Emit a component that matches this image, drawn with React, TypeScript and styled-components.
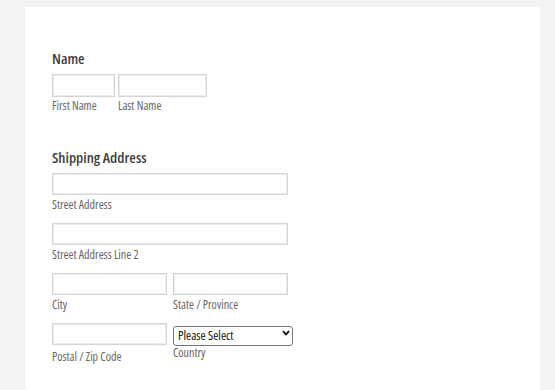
import React from "react";
import styled, { createGlobalStyle } from "styled-components";

const Global = createGlobalStyle`
  html, body { margin: 0; padding: 0; background: #f3f3f3; }
  body { font-family: "Open Sans", sans-serif; }
`;

const Card = styled.div`
  margin: 7px 0 0 25px;
  width: 515px;
  min-height: 383px;
  background: #ffffff;
  box-sizing: border-box;
  padding: 42px 27px 0;
  display: flex;
  flex-direction: column;
`;

const Section = styled.section<{ $gap?: number }>`
  display: flex;
  flex-direction: column;
  margin-bottom: ${(p) => p.$gap ?? 0}px;
`;

const Heading = styled.h2`
  margin: 0 0 7px;
  font-family: "Open Sans", sans-serif;
  font-stretch: 75%;
  font-weight: 600;
  font-size: 15px;
  line-height: 18px;
  color: #3f3f3f;
`;

const Rows = styled.div`
  display: flex;
  flex-direction: column;
  gap: 11px;
`;

const Row = styled.div<{ $gap: number }>`
  display: flex;
  gap: ${(p) => p.$gap}px;
  align-items: flex-start;
`;

const Field = styled.div`
  display: flex;
  flex-direction: column;
`;

const Input = styled.input<{ $w: number; $h?: number }>`
  width: ${(p) => p.$w}px;
  height: ${(p) => p.$h ?? 22}px;
  box-sizing: border-box;
  margin: 0;
  padding: 0 4px;
  border: 1px solid #d4d4d4;
  box-shadow: inset 0 0 0 1px #ececec;
  background: #fff;
  outline: none;
`;

const Label = styled.label<{ $top?: number }>`
  margin-top: ${(p) => p.$top ?? 3}px;
  font-family: "Open Sans", sans-serif;
  font-stretch: 75%;
  font-size: 12px;
  line-height: 14px;
  color: #666666;
`;

const SelectWrap = styled.div`
  position: relative;
  width: 120px;
  height: 20px;
`;

const Select = styled.select`
  appearance: none;
  -webkit-appearance: none;
  width: 120px;
  height: 20px;
  box-sizing: border-box;
  margin: 0;
  padding: 0 18px 0 4px;
  border: 1px solid #767676;
  border-radius: 3px;
  background: #fff;
  font-family: "Open Sans", sans-serif;
  font-stretch: 75%;
  font-weight: 500;
  font-size: 12.5px;
  color: #111;
  outline: none;
`;

const Chevron = styled.svg`
  position: absolute;
  right: 3px;
  top: 7px;
  width: 8px;
  height: 6px;
  pointer-events: none;
`;

export default function App() {
  return (
    <>
      <Global />
      <Card>
        <Section $gap={35}>
          <Heading>Name</Heading>
          <Row $gap={3}>
            <Field>
              <Input $w={63} $h={23} />
              <Label $top={2}>First Name</Label>
            </Field>
            <Field>
              <Input $w={89} $h={23} />
              <Label $top={2}>Last Name</Label>
            </Field>
          </Row>
        </Section>
        <Section>
          <Heading>Shipping Address</Heading>
          <Rows>
            <Row $gap={6}>
              <Field>
                <Input $w={236} />
                <Label>Street Address</Label>
              </Field>
            </Row>
            <Row $gap={6}>
              <Field>
                <Input $w={236} />
                <Label>Street Address Line 2</Label>
              </Field>
            </Row>
            <Row $gap={6}>
              <Field>
                <Input $w={115} />
                <Label>City</Label>
              </Field>
              <Field>
                <Input $w={115} />
                <Label>State / Province</Label>
              </Field>
            </Row>
            <Row $gap={6}>
              <Field>
                <Input $w={115} />
                <Label $top={5}>Postal / Zip Code</Label>
              </Field>
              <Field>
                <SelectWrap>
                  <Select defaultValue="">
                    <option value="">Please Select</option>
                  </Select>
                  <Chevron viewBox="0 0 8 6">
                    <path d="M1 1.2 L4 4.4 L7 1.2" fill="none" stroke="#111" strokeWidth="1.8" />
                  </Chevron>
                </SelectWrap>
                <Label $top={3}>Country</Label>
              </Field>
            </Row>
          </Rows>
        </Section>
      </Card>
    </>
  );
}
